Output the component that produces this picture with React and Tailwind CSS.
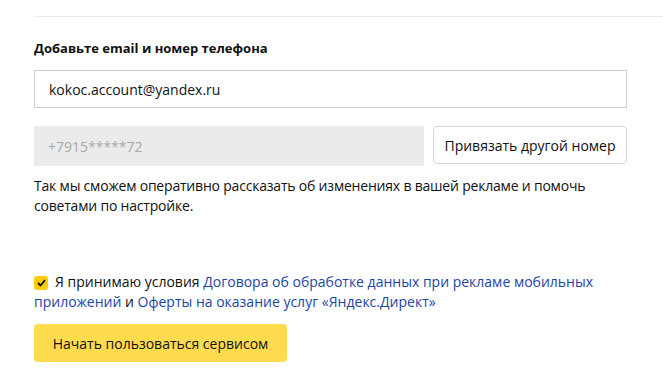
export default function App() {
  return (
    <div className="w-[663px] h-[382px] bg-white overflow-hidden" style={{ fontFamily: '"Open Sans", "Noto Sans", sans-serif' }}>
      <div className="pt-4 pl-[34px]">
        <div className="h-px bg-[#ececec]" />
        <div className="pr-[36px]">
          <h2 className="mt-[22px] text-[13px] font-bold text-[#111] leading-[18px]">Добавьте email и номер телефона</h2>
          <div className="mt-[13px] h-[38px] border border-[#cfcfcf] flex items-center pl-[14px] text-[14px] text-[#111]">
            kokoc.account@yandex.ru
          </div>
          <div className="mt-[18px] flex gap-[9px]">
            <div className="flex-1 h-[40px] bg-[#ebebeb] flex items-center pl-[14px] text-[14px] text-[#a8a8a8]">+7915*****72</div>
            <button className="w-[194px] h-[38px] border border-[#d6d6d6] rounded-[4px] bg-white text-[14px] text-[#111]">Привязать другой номер</button>
          </div>
          <p className="mt-[10px] text-[14px] leading-[20px] text-[#111] tracking-[-0.2px]">
            Так мы сможем оперативно рассказать об изменениях в вашей рекламе и помочь советами по настройке.
          </p>
          <div className="mt-[57px] flex">
            <div className="w-[14px] h-[14px] mt-[3px] bg-[#ffcc00] rounded-[3px] flex items-center justify-center shrink-0">
              <svg width="9" height="8" viewBox="0 0 9 8"><path d="M1 4 L3.5 6.5 L8 1.2" fill="none" stroke="#111" strokeWidth="1.8" /></svg>
            </div>
            <p className="ml-[7px] text-[14px] leading-[20px] text-[#111] -mt-[1px]">
              Я принимаю условия <span className="text-[#1d45a3]">Договора об обработке данных при рекламе мобильных</span>
            </p>
          </div>
          <p className="text-[14px] leading-[20px] text-[#111]">
            <span className="text-[#1d45a3]">приложений</span> и <span className="text-[#1d45a3]">Оферты на оказание услуг «Яндекс.Директ»</span>
          </p>
          <button className="mt-[12px] w-[253px] h-[38px] rounded-[4px] bg-[#ffdb4d] text-[14px] text-[#111]">Начать пользоваться сервисом</button>
        </div>
      </div>
    </div>
  );
}
